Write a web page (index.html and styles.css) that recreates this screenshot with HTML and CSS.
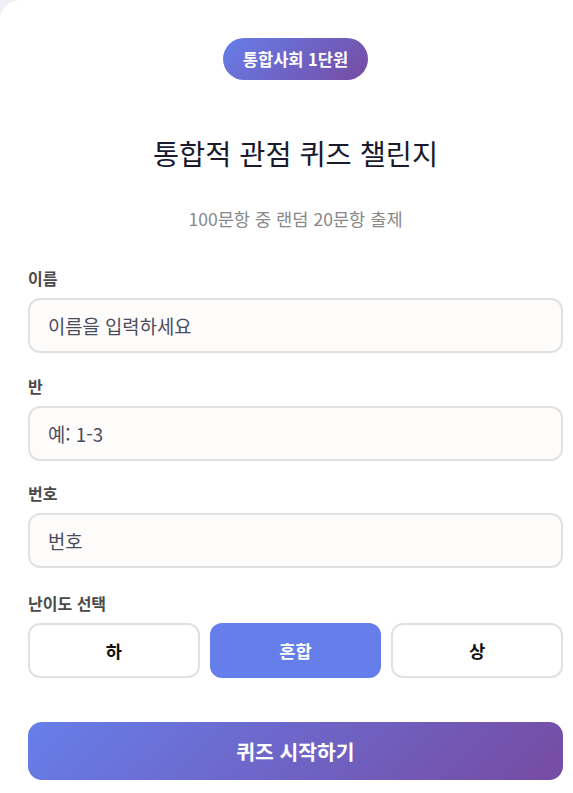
FILE: index.html
```html
<!DOCTYPE html>
<html lang="ko">
<head>
<meta charset="utf-8">
<title>통합적 관점 퀴즈 챌린지</title>
<link rel="stylesheet" href="styles.css">
</head>
<body>
<div class="card">
  <div class="badge-row"><span class="badge">통합사회 1단원</span></div>
  <h1 class="title">통합적 관점 퀴즈 챌린지</h1>
  <p class="subtitle">100문항 중 랜덤 20문항 출제</p>

  <div class="field">
    <label class="label" for="name">이름</label>
    <input class="input" id="name" type="text" placeholder="이름을 입력하세요">
  </div>
  <div class="field">
    <label class="label" for="cls">반</label>
    <input class="input" id="cls" type="text" placeholder="예: 1-3">
  </div>
  <div class="field">
    <label class="label" for="num">번호</label>
    <input class="input" id="num" type="text" placeholder="번호">
  </div>

  <div class="difficulty">
    <div class="label">난이도 선택</div>
    <div class="diff-buttons">
      <button class="diff-btn" type="button">하</button>
      <button class="diff-btn active" type="button">혼합</button>
      <button class="diff-btn" type="button">상</button>
    </div>
  </div>

  <button class="start-btn" type="button">퀴즈 시작하기</button>
</div>
</body>
</html>
```

FILE: styles.css
```css
* {
  box-sizing: border-box;
}

html, body {
  margin: 0;
  padding: 0;
}

body {
  background: #eef0f5;
  font-family: "Noto Sans CJK KR", "Noto Sans", sans-serif;
  overflow: hidden;
}

.card {
  background: #ffffff;
  border-radius: 20px 0 0 0;
  min-height: 793px;
  padding: 38px 10px 0 28px;
}

.badge-row {
  display: flex;
  justify-content: center;
}

.badge {
  display: inline-block;
  background: linear-gradient(135deg, #667eea 0%, #764ba2 100%);
  color: #ffffff;
  font-size: 16.5px;
  font-weight: 700;
  line-height: 22px;
  padding: 10px 20px;
  border-radius: 21px;
}

.title {
  margin: 53px 0 0;
  text-align: center;
  font-size: 28.4px;
  font-weight: 400;
  line-height: 40px;
  color: #1a1a2e;
}

.subtitle {
  margin: 34px 0 0;
  text-align: center;
  font-size: 17.6px;
  line-height: 24px;
  color: #888888;
}

.field {
  margin-top: 21.5px;
}

.subtitle + .field {
  margin-top: 36px;
}

.label {
  display: block;
  font-size: 16px;
  font-weight: 700;
  line-height: 22px;
  color: #4a4a4a;
  margin-bottom: 9px;
}

.input {
  display: block;
  width: 100%;
  height: 55px;
  border: 2px solid #e1e1e1;
  border-radius: 12px;
  background: #fdfcfb;
  padding: 0 18px;
  font-family: inherit;
  font-size: 18.8px;
  color: #333;
  outline: none;
}

.input::placeholder {
  color: #4b4b5e;
  opacity: 1;
}

.difficulty {
  margin-top: 23.5px;
}

.difficulty .label {
  margin-bottom: 9.5px;
}

.diff-buttons {
  display: grid;
  grid-template-columns: repeat(3, 1fr);
  gap: 10px;
}

.diff-btn {
  height: 55px;
  border: 2px solid #e1e1e1;
  border-radius: 12px;
  background: #ffffff;
  font-family: inherit;
  font-size: 17.6px;
  font-weight: 700;
  color: #111111;
  cursor: pointer;
}

.diff-btn.active {
  background: #667eea;
  border-color: #667eea;
  color: #ffffff;
}

.start-btn {
  display: block;
  width: 100%;
  height: 58px;
  margin-top: 44px;
  border: none;
  border-radius: 14px;
  background: linear-gradient(135deg, #667eea 0%, #764ba2 100%);
  color: #ffffff;
  font-family: inherit;
  font-size: 20.4px;
  font-weight: 700;
  cursor: pointer;
}
```
